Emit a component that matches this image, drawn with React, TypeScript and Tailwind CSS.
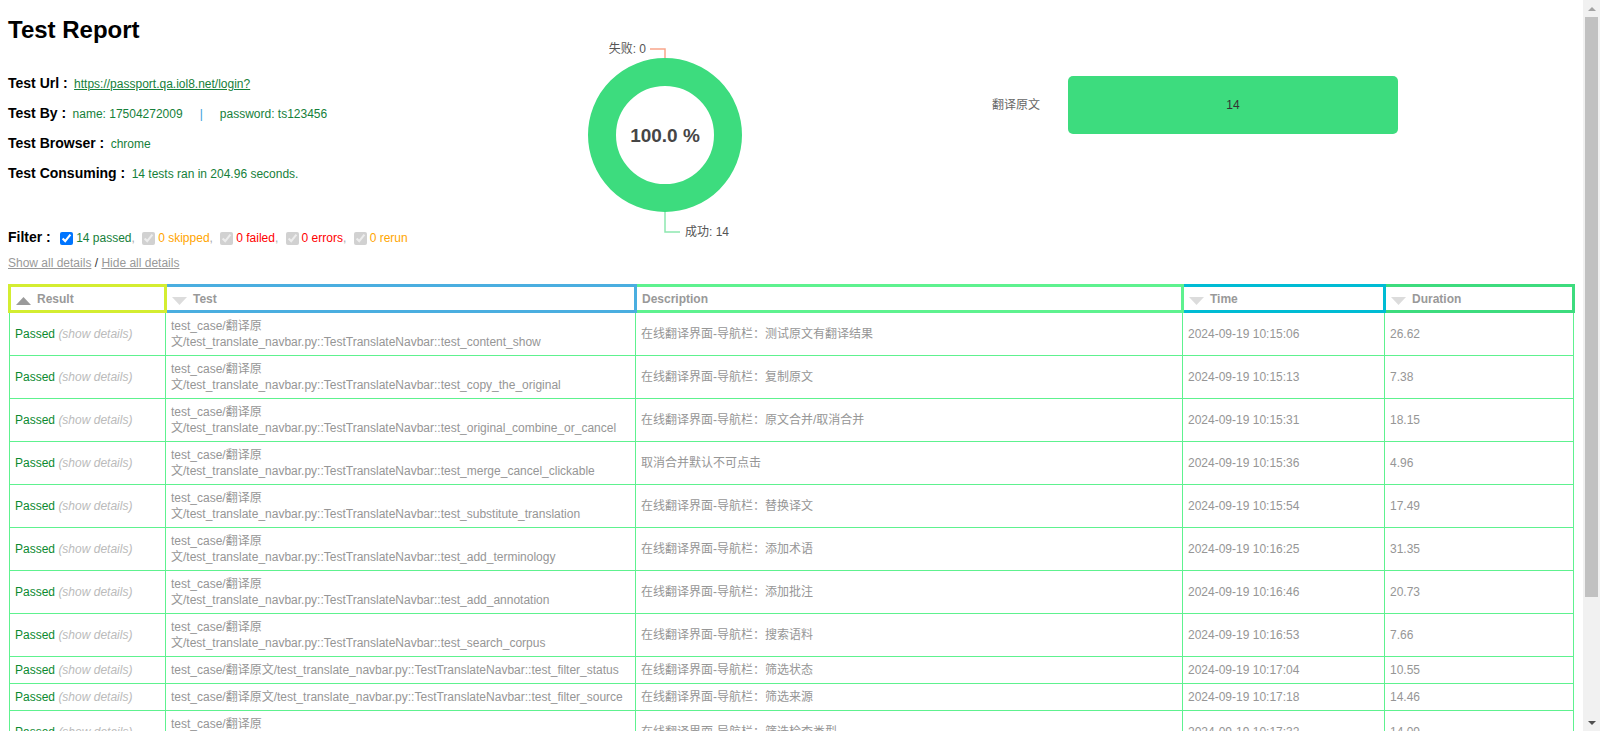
import React from "react";

type Row = { lines: string[]; desc: string; time: string; dur: string };

const prefix = "test_case/翻译原";
const mod = "文/test_translate_navbar.py::TestTranslateNavbar::";

const rows: Row[] = [
  { lines: [prefix, mod + "test_content_show"], desc: "在线翻译界面-导航栏：测试原文有翻译结果", time: "2024-09-19 10:15:06", dur: "26.62" },
  { lines: [prefix, mod + "test_copy_the_original"], desc: "在线翻译界面-导航栏：复制原文", time: "2024-09-19 10:15:13", dur: "7.38" },
  { lines: [prefix, mod + "test_original_combine_or_cancel"], desc: "在线翻译界面-导航栏：原文合并/取消合并", time: "2024-09-19 10:15:31", dur: "18.15" },
  { lines: [prefix, mod + "test_merge_cancel_clickable"], desc: "取消合并默认不可点击", time: "2024-09-19 10:15:36", dur: "4.96" },
  { lines: [prefix, mod + "test_substitute_translation"], desc: "在线翻译界面-导航栏：替换译文", time: "2024-09-19 10:15:54", dur: "17.49" },
  { lines: [prefix, mod + "test_add_terminology"], desc: "在线翻译界面-导航栏：添加术语", time: "2024-09-19 10:16:25", dur: "31.35" },
  { lines: [prefix, mod + "test_add_annotation"], desc: "在线翻译界面-导航栏：添加批注", time: "2024-09-19 10:16:46", dur: "20.73" },
  { lines: [prefix, mod + "test_search_corpus"], desc: "在线翻译界面-导航栏：搜索语料", time: "2024-09-19 10:16:53", dur: "7.66" },
  { lines: [prefix + mod + "test_filter_status"], desc: "在线翻译界面-导航栏：筛选状态", time: "2024-09-19 10:17:04", dur: "10.55" },
  { lines: [prefix + mod + "test_filter_source"], desc: "在线翻译界面-导航栏：筛选来源", time: "2024-09-19 10:17:18", dur: "14.46" },
  { lines: [prefix, mod + "test_filter_check_type"], desc: "在线翻译界面-导航栏：筛选检查类型", time: "2024-09-19 10:17:32", dur: "14.09" },
  { lines: [prefix, mod + "test_filter_match_rate"], desc: "在线翻译界面-导航栏：筛选匹配率", time: "2024-09-19 10:17:44", dur: "10.21" },
  { lines: [prefix, mod + "test_batch_confirm"], desc: "在线翻译界面-导航栏：批量确认", time: "2024-09-19 10:17:56", dur: "9.87" },
  { lines: [prefix + mod + "test_lock_segment"], desc: "在线翻译界面-导航栏：锁定句段", time: "2024-09-19 10:18:08", dur: "11.36" },
];

const heads = [
  { label: "Result", border: "border-[#d4ed31]", tri: "up" },
  { label: "Test", border: "border-[#4aaee0]", tri: "down" },
  { label: "Description", border: "border-[#5ef28f]", tri: "" },
  { label: "Time", border: "border-[#00bcd4]", tri: "down" },
  { label: "Duration", border: "border-[#3ddc7e]", tri: "down" },
];

function Triangle({ dir }: { dir: string }) {
  if (!dir) return null;
  return (
    <svg width="15" height="8" viewBox="0 0 15 8" className="mr-[6px] inline-block align-[-2px]">
      {dir === "up" ? (
        <polygon points="0,8 7.5,0 15,8" fill="#9a9a9a" />
      ) : (
        <polygon points="0,0 15,0 7.5,8" fill="#dcdcdc" />
      )}
    </svg>
  );
}

function Donut() {
  return (
    <svg width="360" height="250" viewBox="0 0 360 250" className="shrink-0">
      <circle cx="177" cy="127" r="63" fill="none" stroke="#3ddc7e" strokeWidth="28" />
      <text x="177" y="127" textAnchor="middle" dominantBaseline="central" fontSize="19" fontWeight="bold" fill="#464646" fontFamily="Liberation Sans, sans-serif">
        100.0 %
      </text>
      <polyline points="162,41 177,41 177,50" fill="none" stroke="#f9a58b" strokeWidth="1.5" />
      <text x="158" y="41" textAnchor="end" dominantBaseline="central" fontSize="12" fill="#555" fontFamily="Liberation Sans, Noto Sans CJK SC, sans-serif">
        失败: 0
      </text>
      <polyline points="177,204 177,224 192,224" fill="none" stroke="#8de8b0" strokeWidth="1.5" />
      <text x="197" y="224" dominantBaseline="central" fontSize="12" fill="#555" fontFamily="Liberation Sans, Noto Sans CJK SC, sans-serif">
        成功: 14
      </text>
    </svg>
  );
}

function ScrollBar() {
  return (
    <div className="flex w-[17px] shrink-0 flex-col bg-[#f1f1f1]">
      <div className="flex h-[17px] items-center justify-center">
        <svg width="8" height="4" viewBox="0 0 8 4">
          <polygon points="0,4 4,0 8,4" fill="#a3a3a3" />
        </svg>
      </div>
      <div className="mx-[2px] h-[580px] bg-[#c1c1c1]" />
      <div className="flex-1" />
      <div className="flex h-[17px] items-center justify-center">
        <svg width="8" height="4" viewBox="0 0 8 4">
          <polygon points="0,0 8,0 4,4" fill="#505050" />
        </svg>
      </div>
    </div>
  );
}

const td = "border border-[#5ef28f] px-[5px] py-[5px] text-[12px] leading-4 text-[#969696]";

export default function App() {
  return (
    <div className="flex h-screen bg-white font-['Liberation_Sans','Noto_Sans_CJK_SC',sans-serif] text-black">
      <div className="min-w-0 flex-1 overflow-y-auto p-2">
        {/* Header: summary, pie, bar */}
        <div className="flex">
          <div className="w-[480px] shrink-0">
            <h1 className="mt-2 text-[24px] font-bold leading-[28px]">Test Report</h1>

            <div className="mt-6">
              <div className="h-[30px] whitespace-nowrap leading-[30px]">
                <span className="text-[14px] font-bold">Test Url :</span>{" "}
                <a className="ml-[2px] text-[12px] text-[#16803a] underline">https://passport.qa.iol8.net/login?</a>
              </div>
              <div className="h-[30px] whitespace-nowrap leading-[30px]">
                <span className="text-[14px] font-bold">Test By :</span>{" "}
                <span className="ml-[2px] text-[12px] text-[#16803a]">name: 17504272009</span>
                <span className="mx-[17px] text-[12px] text-[#3ba1da]">|</span>
                <span className="text-[12px] text-[#16803a]">password: ts123456</span>
              </div>
              <div className="h-[30px] whitespace-nowrap leading-[30px]">
                <span className="text-[14px] font-bold">Test Browser :</span>{" "}
                <span className="ml-[2px] text-[12px] text-[#16803a]">chrome</span>
              </div>
              <div className="h-[30px] whitespace-nowrap leading-[30px]">
                <span className="text-[14px] font-bold">Test Consuming :</span>{" "}
                <span className="ml-[2px] text-[12px] text-[#16803a]">14 tests ran in 204.96 seconds.</span>
              </div>
            </div>

            <div className="mt-[34px] h-[30px] whitespace-nowrap text-[12px] leading-[30px]">
              <span className="text-[14px] font-bold">Filter :</span>{" "}
              <input type="checkbox" defaultChecked className="ml-[6px] mr-[3px] align-middle" />
              <span className="text-[#16803a]">14 passed</span>
              <span className="text-[#aaa]">, </span>
              <input type="checkbox" defaultChecked disabled className="ml-1 mr-[3px] align-middle" />
              <span className="text-[#ffa500]">0 skipped</span>
              <span className="text-[#aaa]">, </span>
              <input type="checkbox" defaultChecked disabled className="ml-1 mr-[3px] align-middle" />
              <span className="text-[#f00]">0 failed</span>
              <span className="text-[#aaa]">, </span>
              <input type="checkbox" defaultChecked disabled className="ml-1 mr-[3px] align-middle" />
              <span className="text-[#f00]">0 errors</span>
              <span className="text-[#aaa]">, </span>
              <input type="checkbox" defaultChecked disabled className="ml-1 mr-[3px] align-middle" />
              <span className="text-[#ffa500]">0 rerun</span>
            </div>

            <div className="mt-[3px] text-[12px] leading-4">
              <a className="text-[#999] underline">Show all details</a>
              <span className="text-[#333]"> / </span>
              <a className="text-[#999] underline">Hide all details</a>
            </div>
          </div>

          <Donut />

          <div className="ml-[144px] mt-[68px] flex h-[58px] items-center">
            <span className="w-[48px] text-[12px] text-[#666]">翻译原文</span>
            <div className="ml-[28px] flex h-[58px] w-[330px] items-center justify-center rounded-[5px] bg-[#3ddc7e] text-[12px] text-[#333]">
              14
            </div>
          </div>
        </div>

        {/* Results table */}
        <table className="mt-[13px] w-[1564px] table-fixed border-collapse">
          <colgroup>
            <col className="w-[156px]" />
            <col className="w-[470px]" />
            <col className="w-[547px]" />
            <col className="w-[202px]" />
            <col className="w-[189px]" />
          </colgroup>
          <thead>
            <tr>
              {heads.map((h) => (
                <th
                  key={h.label}
                  className={`border-[3px] ${h.border} pt-[4px] pb-[3px] pl-[5px] text-left text-[12px] font-bold leading-4 text-[#999]`}
                >
                  <Triangle dir={h.tri} />
                  {h.label}
                </th>
              ))}
            </tr>
          </thead>
          <tbody>
            {rows.map((r, i) => (
              <tr key={i}>
                <td className={`${td} whitespace-nowrap`}>
                  <span className="text-[#0b8a30]">Passed</span>{" "}
                  <span className="italic text-[#bbb]">(show details)</span>
                </td>
                <td className={`${td} whitespace-nowrap`}>
                  {r.lines.map((l, j) => (
                    <div key={j}>{l}</div>
                  ))}
                </td>
                <td className={td}>{r.desc}</td>
                <td className={td}>{r.time}</td>
                <td className={td}>{r.dur}</td>
              </tr>
            ))}
          </tbody>
        </table>
      </div>
      <ScrollBar />
    </div>
  );
}
